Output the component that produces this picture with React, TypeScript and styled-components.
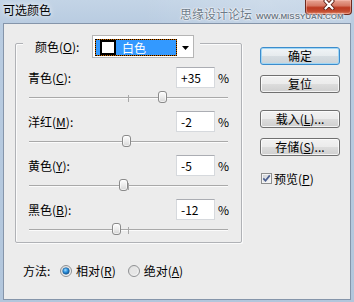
import React from "react";
import styled, { createGlobalStyle } from "styled-components";

const FONT = `"Noto Sans CJK SC", "Noto Sans", sans-serif`;

const GlobalStyle = createGlobalStyle`
  html, body { margin: 0; padding: 0; }
  body {
    width: 354px;
    height: 302px;
    overflow: hidden;
    font-family: ${FONT};
    font-size: 12px;
    color: #000;
  }
  #root { width: 354px; height: 302px; }
`;

const Window = styled.div`
  box-sizing: border-box;
  width: 354px;
  height: 302px;
  display: flex;
  flex-direction: column;
  padding: 0 3px 2px 3px;
  background: linear-gradient(to bottom, #c3d4e6 0, #b9cce1 23px, #b2c6dc 100%);
`;

const TitleBar = styled.div`
  position: relative;
  height: 23px;
  flex: none;
  display: flex;
  align-items: flex-start;
  background: linear-gradient(to right, rgba(255, 255, 255, 0) 40%, rgba(255, 255, 255, 0.18) 75%, rgba(255, 255, 255, 0.1) 100%);
`;

const TitleText = styled.div`
  padding-top: 3px;
  font-size: 12px;
  line-height: 14px;
  color: #000;
  text-shadow: 0 0 4px rgba(255, 255, 255, 0.9), 0 0 8px rgba(255, 255, 255, 0.6);
`;

const Watermark = styled.div`
  position: absolute;
  left: 177px;
  top: 6px;
  z-index: 2;
  display: flex;
  align-items: baseline;
  gap: 4px;
  color: #6d7a88;
  text-shadow: 0 0 1px #fff, 0 0 2px #fff, 0 0 2px #fff;
  pointer-events: none;
  white-space: nowrap;
`;

const WatermarkCn = styled.span`
  font-size: 12px;
  line-height: 16px;
`;

const WatermarkEn = styled.span`
  font-family: "Liberation Sans", Arial, sans-serif;
  font-size: 8px;
  font-weight: bold;
  line-height: 10px;
`;

const CloseButton = styled.div`
  margin-left: auto;
  margin-right: -1px;
  box-sizing: border-box;
  width: 47px;
  height: 15px;
  border: 1px solid #6e2a1f;
  border-top: none;
  border-radius: 0 0 4px 4px;
  background: linear-gradient(to bottom, #e8a696 0%, #d67864 40%, #bd3a22 55%, #c24a2f 80%, #dd7d5d 100%);
  box-shadow: inset 0 0 0 1px rgba(255, 200, 190, 0.45);
  display: flex;
  justify-content: center;
  align-items: flex-start;
  z-index: 1;
`;

const Client = styled.div`
  flex: 1;
  display: flex;
  border: 1px solid #8595aa;
  background: #ececec;
`;

const LeftCol = styled.div`
  display: flex;
  flex-direction: column;
  padding: 19px 0 0 11px;
`;

const GroupBox = styled.div`
  box-sizing: border-box;
  width: 227px;
  height: 200px;
  border: 1px solid #b0b2b6;
  border-radius: 2px;
  box-shadow: inset 1px 1px 0 #fbfbfb, 1px 1px 0 #fbfbfb;
  display: flex;
  flex-direction: column;
  padding: 0 12px;
`;

const Legend = styled.div`
  align-self: flex-start;
  margin: -9px 0 0 -5px;
  height: 23px;
  padding: 0 6px 0 12px;
  background: #ececec;
  display: flex;
  align-items: center;
`;

const LegendLabel = styled.span`
  width: 57px;
  line-height: 14px;
`;

const Dropdown = styled.div`
  box-sizing: border-box;
  width: 102px;
  height: 23px;
  border: 1px solid #b5b5b5;
  background: #fff;
  display: flex;
  align-items: flex-start;
  padding: 3px 0 0 2px;
`;

const Selection = styled.div`
  box-sizing: border-box;
  width: 82px;
  height: 17px;
  border: 1px dotted #000;
  background: linear-gradient(#3399ff, #3399ff) padding-box, linear-gradient(#d06b00, #d06b00) border-box;
  display: flex;
  align-items: center;
  padding-left: 4px;
  color: #fff;
`;

const Swatch = styled.span`
  box-sizing: border-box;
  width: 16px;
  height: 15px;
  background: #fff;
  border: 2px solid #000;
`;

const SelectionText = styled.span`
  margin-left: 6px;
  line-height: 14px;
`;

const ArrowBox = styled.div`
  flex: 1;
  height: 17px;
  display: flex;
  align-items: center;
  justify-content: center;
`;

const Blocks = styled.div`
  margin-top: 9px;
  display: flex;
  flex-direction: column;
`;

const Block = styled.div`
  display: flex;
  flex-direction: column;
  height: 44px;
`;

const Row = styled.div`
  display: flex;
  align-items: center;
  height: 21px;
`;

const RowLabel = styled.span`
  flex: 1;
  line-height: 14px;
`;

const TextBox = styled.div`
  box-sizing: border-box;
  width: 39px;
  height: 21px;
  border: 1px solid #d6d9dd;
  border-top-color: #abadb3;
  background: #fff;
  padding-left: 4px;
  line-height: 19px;
  font-size: 12px;
`;

const Percent = styled.span`
  width: 14px;
  text-align: right;
  line-height: 14px;
`;

const Slider = styled.div`
  position: relative;
  height: 23px;
`;

const Track = styled.div`
  position: relative;
  margin: 9px 0 0 1px;
  width: 199px;
  height: 0;
  border-top: 1px solid #a9a9a9;
  border-bottom: 1px solid #fbfbfb;
`;

const Tick = styled.span`
  position: absolute;
  left: 99px;
  top: -3px;
  width: 1px;
  height: 7px;
  background: #a8a8a8;
`;

const Thumb = styled.span`
  position: absolute;
  top: 3px;
  box-sizing: border-box;
  width: 9px;
  height: 12px;
  border: 1px solid #8a8a8a;
  border-radius: 3px;
  background: linear-gradient(to bottom, #fdfdfd 0%, #ececec 50%, #d6d6d6 100%);
  box-shadow: inset 0 0 0 1px rgba(255, 255, 255, 0.6);
`;

const Key = styled.span`
  text-decoration: underline;
  text-underline-offset: 1px;
`;

const RightCol = styled.div`
  display: flex;
  flex-direction: column;
  padding: 23px 0 0 18px;
`;

const Button = styled.button<{ $default?: boolean; $gap: number }>`
  box-sizing: border-box;
  width: 80px;
  height: 18px;
  margin: ${(p) => p.$gap}px 0 0 0;
  padding: 0;
  font-family: ${FONT};
  font-size: 12px;
  line-height: 14px;
  color: #000;
  border: 1px solid ${(p) => (p.$default ? "#3c8ccc" : "#707070")};
  border-radius: 3px;
  background: ${(p) =>
    p.$default
      ? "linear-gradient(to bottom, #f0f4f7 0%, #e6ebee 50%, #d6dde2 50%, #ccd3d8 100%)"
      : "linear-gradient(to bottom, #f2f2f2 0%, #ebebeb 50%, #dddddd 50%, #cfcfcf 100%)"};
  box-shadow: inset 0 0 0 1px ${(p) => (p.$default ? "#9fd6f5" : "rgba(255, 255, 255, 0.75)")};
  display: flex;
  align-items: center;
  justify-content: center;
`;

const CheckRow = styled.div`
  margin-top: 16px;
  height: 13px;
  padding-left: 1px;
  display: flex;
  align-items: center;
`;

const CheckLabel = styled.span`
  margin-left: 2px;
  line-height: 14px;
`;

const MethodRow = styled.div`
  margin-top: 20px;
  height: 16px;
  padding-left: 8px;
  display: flex;
  align-items: center;
`;

const MethodLabel = styled.span`
  width: 37px;
  line-height: 14px;
`;

const RadioOption = styled.div`
  display: flex;
  align-items: center;
  margin-right: 12px;
`;

const RadioLabel = styled.span`
  margin-left: 4px;
  line-height: 14px;
`;

const CloseIcon = () => (
  <svg width="12" height="10" viewBox="0 0 12 10">
    <path d="M2.5 1 L9.5 8.5 M9.5 1 L2.5 8.5" stroke="#5a1c12" strokeWidth="4" strokeLinecap="round" />
    <path d="M2.5 1 L9.5 8.5 M9.5 1 L2.5 8.5" stroke="#ffffff" strokeWidth="2.2" strokeLinecap="round" />
  </svg>
);

const DownArrow = () => (
  <svg width="7" height="4" viewBox="0 0 7 4">
    <path d="M0 0 H7 L3.5 4 Z" fill="#000" />
  </svg>
);

const Checkbox = () => (
  <svg width="11" height="11" viewBox="0 0 11 11">
    <defs>
      <linearGradient id="cbFill" x1="0" y1="0" x2="1" y2="1">
        <stop offset="0" stopColor="#cfd2d6" />
        <stop offset="1" stopColor="#f7f7f7" />
      </linearGradient>
    </defs>
    <rect x="0.5" y="0.5" width="10" height="10" fill="#f4f4f4" stroke="#8e8f8f" />
    <rect x="2" y="2" width="7" height="7" fill="url(#cbFill)" />
    <path d="M2.3 5.4 L4.5 7.8 L8.8 2.4" fill="none" stroke="#4c5f8f" strokeWidth="1.7" />
  </svg>
);

const Radio = ({ checked }: { checked?: boolean }) => (
  <svg width="12" height="12" viewBox="0 0 12 12">
    <defs>
      <linearGradient id="rdRing" x1="0" y1="0" x2="1" y2="1">
        <stop offset="0" stopColor="#d8d8d8" />
        <stop offset="1" stopColor="#fbfbfb" />
      </linearGradient>
      <radialGradient id="rdDot" cx="0.4" cy="0.35" r="0.7">
        <stop offset="0" stopColor="#9fdcff" />
        <stop offset="0.5" stopColor="#2b8fdc" />
        <stop offset="1" stopColor="#0d4f8c" />
      </radialGradient>
    </defs>
    <circle cx="6" cy="6" r="5.5" fill="url(#rdRing)" stroke="#8f9193" />
    {checked ? (
      <circle cx="6" cy="6" r="3.3" fill="url(#rdDot)" stroke="#1d5a92" strokeWidth="0.6" />
    ) : (
      <circle cx="6" cy="6" r="3.5" fill="#e6e6e6" />
    )}
  </svg>
);

type Channel = { name: string; key: string; value: number };

const channels: Channel[] = [
  { name: "青色", key: "C", value: 35 },
  { name: "洋红", key: "M", value: -2 },
  { name: "黄色", key: "Y", value: -5 },
  { name: "黑色", key: "B", value: -12 },
];

const formatValue = (v: number) => (v > 0 ? `+${v}` : `${v}`);

const SliderBlock = ({ ch }: { ch: Channel }) => {
  const center = 1 + ((ch.value + 100) / 200) * 198;
  return (
    <Block>
      <Row>
        <RowLabel>
          {ch.name}(<Key>{ch.key}</Key>):
        </RowLabel>
        <TextBox>{formatValue(ch.value)}</TextBox>
        <Percent>%</Percent>
      </Row>
      <Slider>
        <Track>
          <Tick />
        </Track>
        <Thumb style={{ left: `${Math.round(center - 4.5)}px` }} />
      </Slider>
    </Block>
  );
};

export default function App() {
  return (
    <>
      <GlobalStyle />
      <Window>
        <TitleBar>
          <TitleText>可选颜色</TitleText>
          <Watermark>
            <WatermarkCn>思缘设计论坛</WatermarkCn>
            <WatermarkEn>WWW.MISSYUAN.COM</WatermarkEn>
          </Watermark>
          <CloseButton>
            <CloseIcon />
          </CloseButton>
        </TitleBar>
        <Client>
          <LeftCol>
            <GroupBox>
              <Legend>
                <LegendLabel>
                  颜色(<Key>O</Key>):
                </LegendLabel>
                <Dropdown>
                  <Selection>
                    <Swatch />
                    <SelectionText>白色</SelectionText>
                  </Selection>
                  <ArrowBox>
                    <DownArrow />
                  </ArrowBox>
                </Dropdown>
              </Legend>
              <Blocks>
                {channels.map((ch) => (
                  <SliderBlock key={ch.key} ch={ch} />
                ))}
              </Blocks>
            </GroupBox>
            <MethodRow>
              <MethodLabel>方法:</MethodLabel>
              <RadioOption>
                <Radio checked />
                <RadioLabel>
                  相对(<Key>R</Key>)
                </RadioLabel>
              </RadioOption>
              <RadioOption>
                <Radio />
                <RadioLabel>
                  绝对(<Key>A</Key>)
                </RadioLabel>
              </RadioOption>
            </MethodRow>
          </LeftCol>
          <RightCol>
            <Button $default $gap={0}>确定</Button>
            <Button $gap={10}>复位</Button>
            <Button $gap={17}>
              载入(<Key>L</Key>)...
            </Button>
            <Button $gap={10}>
              存储(<Key>S</Key>)...
            </Button>
            <CheckRow>
              <Checkbox />
              <CheckLabel>
                预览(<Key>P</Key>)
              </CheckLabel>
            </CheckRow>
          </RightCol>
        </Client>
      </Window>
    </>
  );
}
